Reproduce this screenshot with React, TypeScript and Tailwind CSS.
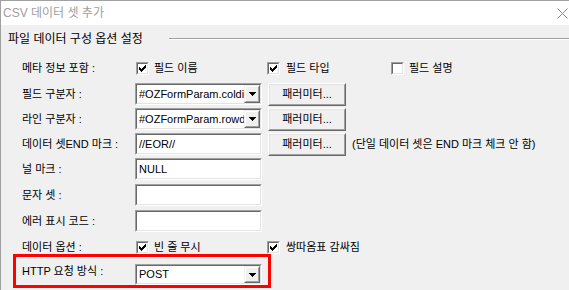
import React from "react";

const Check = () => (
  <svg width="7" height="7" viewBox="0 0 7 7" shapeRendering="crispEdges">
    <path d="M0 2h1v1h1v1h1v-1h1v-1h1v-1h1v-1h1v3h-1v1h-1v1h-1v1h-1v1h-1v-1h-1v-1h-1v-1h-1z" fill="#000" />
  </svg>
);

const CheckBox = ({ checked }: { checked: boolean }) => (
  <div className="w-[13px] h-[13px] shrink-0 border border-t-[#a0a0a0] border-l-[#a0a0a0] border-b-white border-r-white">
    <div className="w-full h-full border border-t-[#696969] border-l-[#696969] border-b-[#e3e3e3] border-r-[#e3e3e3] bg-white flex items-center justify-center">
      {checked ? <Check /> : null}
    </div>
  </div>
);

const TextBox = ({ value, className }: { value: string; className?: string }) => (
  <div className={`shrink-0 border border-t-[#a0a0a0] border-l-[#a0a0a0] border-b-white border-r-white ${className ?? ""}`}>
    <div className="w-full h-full border border-t-[#696969] border-l-[#696969] border-b-[#e3e3e3] border-r-[#e3e3e3] bg-white flex items-center pl-[2px] text-[11px] leading-[13px] text-black overflow-hidden whitespace-nowrap">
      {value}
    </div>
  </div>
);

const Combo = ({ value, className }: { value: string; className?: string }) => (
  <div className={`shrink-0 border border-t-[#a0a0a0] border-l-[#a0a0a0] border-b-white border-r-white ${className ?? ""}`}>
    <div className="w-full h-full border border-t-[#696969] border-l-[#696969] border-b-[#e3e3e3] border-r-[#e3e3e3] bg-white flex items-stretch">
      <div className="flex-1 min-w-0 flex items-center pl-[2px] text-[11px] leading-[13px] text-black overflow-hidden whitespace-nowrap">
        {value}
      </div>
      <div className="w-[16px] shrink-0 border border-t-[#f0f0f0] border-l-[#f0f0f0] border-b-[#696969] border-r-[#696969]">
        <div className="w-full h-full border border-t-white border-l-white border-b-[#a0a0a0] border-r-[#a0a0a0] bg-[#f0f0f0] flex items-center justify-center">
          <svg width="7" height="4" viewBox="0 0 7 4" shapeRendering="crispEdges">
            <path d="M0 0h7v1h-1v1h-1v1h-1v1h-1v-1h-1v-1h-1v-1h-1z" fill="#000" />
          </svg>
        </div>
      </div>
    </div>
  </div>
);

const Button = ({ label }: { label: string }) => (
  <div className="w-[78px] h-[23px] shrink-0 border border-t-white border-l-white border-b-[#696969] border-r-[#696969]">
    <div className="w-full h-full border border-t-[#e3e3e3] border-l-[#e3e3e3] border-b-[#a0a0a0] border-r-[#a0a0a0] bg-[#f0f0f0] flex items-center justify-center text-[11px] leading-[13px] text-black">
      {label}
    </div>
  </div>
);

const Label = ({ text }: { text: string }) => (
  <div className="w-[113px] shrink-0 text-[11px] leading-[14px] text-black whitespace-nowrap">{text}</div>
);

export default function App() {
  return (
    <div className="w-[569px] h-[290px] overflow-hidden bg-[#f0f0f0] border-t border-l border-[#a0a0a0] flex flex-col font-['Liberation_Sans','Noto_Sans_CJK_KR',sans-serif]">
      <div className="h-[24px] shrink-0 bg-white flex items-center pl-[2px] pr-[1px]">
        <span className="text-[12px] leading-[14px] text-[#a0a0a0] whitespace-nowrap">CSV 데이터 셋 추가</span>
        <svg className="ml-auto" width="11" height="11" viewBox="0 0 11 11">
          <path d="M0.5 0.5L10.5 10.5M10.5 0.5L0.5 10.5" stroke="#8a8a8a" strokeWidth="1" />
        </svg>
      </div>

      <div className="h-[28px] shrink-0 flex items-center pl-[7px]">
        <span className="text-[12px] leading-[14px] text-black whitespace-nowrap">파일 데이터 구성 옵션 설정</span>
        <div className="ml-[26px] flex-1 border-t border-b border-t-[#a0a0a0] border-b-white" />
      </div>

      <div className="mt-[4px] h-[22px] shrink-0 flex items-center pl-[21px]">
        <Label text="메타 정보 포함 :" />
        <div className="w-[132px] shrink-0 flex items-center pl-[1px]">
          <CheckBox checked />
          <span className="ml-[5px] text-[11px] leading-[14px]">필드 이름</span>
        </div>
        <div className="w-[124px] shrink-0 flex items-center">
          <CheckBox checked />
          <span className="ml-[6px] text-[11px] leading-[14px]">필드 타입</span>
        </div>
        <div className="flex items-center">
          <CheckBox checked={false} />
          <span className="ml-[5px] text-[11px] leading-[14px]">필드 설명</span>
        </div>
      </div>

      <div className="mt-[4px] h-[22px] shrink-0 flex items-center pl-[21px]">
        <Label text="필드 구분자 :" />
        <Combo value="#OZFormParam.coldiv" className="w-[127px] h-[22px]" />
        <div className="ml-[6px]">
          <Button label="패러미터..." />
        </div>
      </div>

      <div className="mt-[3px] h-[22px] shrink-0 flex items-center pl-[21px]">
        <Label text="라인 구분자 :" />
        <Combo value="#OZFormParam.rowdiv" className="w-[127px] h-[22px]" />
        <div className="ml-[6px]">
          <Button label="패러미터..." />
        </div>
      </div>

      <div className="mt-[3px] h-[22px] shrink-0 flex items-center pl-[21px]">
        <Label text="데이터 셋END 마크 :" />
        <TextBox value="//EOR//" className="w-[127px] h-[22px]" />
        <div className="ml-[6px]">
          <Button label="패러미터..." />
        </div>
        <span className="ml-[6px] text-[11px] leading-[14px] whitespace-nowrap">(단일 데이터 셋은 END 마크 체크 안 함)</span>
      </div>

      <div className="mt-[3px] h-[22px] shrink-0 flex items-center pl-[21px]">
        <Label text="널 마크 :" />
        <TextBox value="NULL" className="w-[127px] h-[22px]" />
      </div>

      <div className="mt-[4px] h-[22px] shrink-0 flex items-center pl-[21px]">
        <Label text="문자 셋 :" />
        <TextBox value="" className="w-[127px] h-[22px]" />
      </div>

      <div className="mt-[4px] h-[22px] shrink-0 flex items-center pl-[21px]">
        <Label text="에러 표시 코드 :" />
        <TextBox value="" className="w-[127px] h-[22px]" />
      </div>

      <div className="mt-[8px] h-[14px] shrink-0 flex items-center pl-[21px]">
        <Label text="데이터 옵션 :" />
        <div className="w-[132px] shrink-0 flex items-center pl-[1px]">
          <CheckBox checked />
          <span className="ml-[5px] text-[11px] leading-[14px]">빈 줄 무시</span>
        </div>
        <div className="flex items-center">
          <CheckBox checked />
          <span className="ml-[6px] text-[11px] leading-[14px]">쌍따옴표 감싸짐</span>
        </div>
      </div>

      <div className="ml-[12px] w-[258px] h-[34px] shrink-0 border-[3px] border-[#ff0000] flex items-center pl-[6px]">
        <Label text="HTTP 요청 방식 :" />
        <Combo value="POST" className="w-[127px] h-[21px] self-end" />
      </div>
    </div>
  );
}
